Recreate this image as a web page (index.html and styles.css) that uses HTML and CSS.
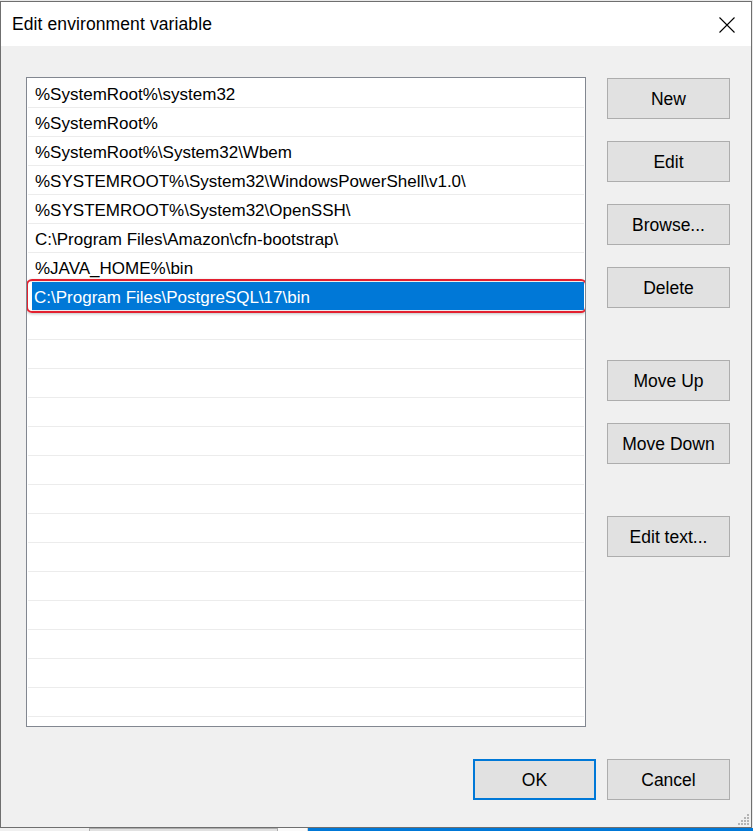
FILE: index.html
```html
<!DOCTYPE html>
<html lang="en">
<head>
  <meta charset="UTF-8">
  <title>Edit environment variable</title>
  <link rel="stylesheet" href="styles.css">
</head>
<body>
  <div class="window">
    <div class="titlebar">
      <span class="title">Edit environment variable</span>
      <svg class="close" width="16" height="16" viewBox="0 0 16 16">
        <path d="M0.5 0.5 L15.5 15.5 M15.5 0.5 L0.5 15.5" stroke="#000" stroke-width="1.1" fill="none"/>
      </svg>
    </div>

    <div class="client">
      <div class="main">
        <ul class="list">
          <li>%SystemRoot%\system32</li>
          <li>%SystemRoot%</li>
          <li>%SystemRoot%\System32\Wbem</li>
          <li>%SYSTEMROOT%\System32\WindowsPowerShell\v1.0\</li>
          <li>%SYSTEMROOT%\System32\OpenSSH\</li>
          <li>C:\Program Files\Amazon\cfn-bootstrap\</li>
          <li>%JAVA_HOME%\bin</li>
          <li class="selected">C:\Program Files\PostgreSQL\17\bin</li>
          <li></li><li></li><li></li><li></li><li></li><li></li><li></li>
          <li></li><li></li><li></li><li></li><li></li><li></li><li></li>
        </ul>

        <div class="actions">
          <div class="group">
            <button>New</button>
            <button>Edit</button>
            <button>Browse...</button>
            <button>Delete</button>
          </div>
          <div class="group">
            <button>Move Up</button>
            <button>Move Down</button>
          </div>
          <div class="group">
            <button>Edit text...</button>
          </div>
        </div>
      </div>

      <div class="footer">
        <button class="default">OK</button>
        <button>Cancel</button>
      </div>

      <!-- poignée de redimensionnement -->
      <svg class="grip" width="12" height="12" viewBox="0 0 12 12" fill="#b4b4b4">
        <rect x="9" y="0" width="2" height="2"/>
        <rect x="6" y="3" width="2" height="2"/>
        <rect x="9" y="3" width="2" height="2"/>
        <rect x="3" y="6" width="2" height="2"/>
        <rect x="6" y="6" width="2" height="2"/>
        <rect x="9" y="6" width="2" height="2"/>
        <rect x="0" y="9" width="2" height="2"/>
        <rect x="3" y="9" width="2" height="2"/>
        <rect x="6" y="9" width="2" height="2"/>
        <rect x="9" y="9" width="2" height="2"/>
      </svg>
    </div>
  </div>

  <div class="backdrop">
    <span class="bd-light"></span>
    <span class="bd-button"></span>
    <span class="bd-white"></span>
    <span class="bd-blue"></span>
  </div>
</body>
</html>
```

FILE: styles.css
```css
/* === Base === */
:root {
  --win-border: #6f6f6f;
  --client-bg:  #f0f0f0;
  --btn-bg:     #e1e1e1;
  --btn-border: #adadad;
  --accent:     #0078d7;
  --mark:       #e3202f;
}

* {
  box-sizing: border-box;
  margin: 0;
  padding: 0;
}

body {
  font-family: "Liberation Sans", Arial, sans-serif;
  background: #e9e9e9;
  color: #000;
  padding-top: 1px;
  width: 753px;
  overflow: hidden;
}

/* === Fenêtre === */
.window {
  width: 752px;
  height: 827px;
  border: 1px solid var(--win-border);
  background: var(--client-bg);
  display: flex;
  flex-direction: column;
}

.titlebar {
  height: 44px;
  background: #fff;
  display: flex;
  align-items: center;
  justify-content: space-between;
  padding: 1px 16px 0 11px;
}
.title {
  font-size: 17.5px;
  letter-spacing: 0.1px;
}
.close {
  display: block;
}

.client {
  flex: 1;
  position: relative;
  padding: 31px 21px 0 25px;
}

.main {
  display: flex;
  gap: 21px;
}

/* === Liste des chemins === */
.list {
  list-style: none;
  width: 560px;
  height: 650px;
  border: 1px solid #828790;
  background: #fff;
  padding-top: 1px;
  overflow: hidden;
}
.list li {
  height: 29px;
  line-height: 31px;
  margin: 0 1px 0 1px;
  padding-left: 7px;
  border-bottom: 1px solid #ececec;
  font-size: 17px;
  white-space: nowrap;
  overflow: hidden;
}
.list li.selected {
  position: relative;
  overflow: visible;
  margin-left: 5px;
  padding-left: 2px;
  background: var(--accent);
  background-clip: padding-box;
  color: #fff;
}
/* cadre rouge d'annotation */
.list li.selected::after {
  content: "";
  position: absolute;
  top: -3px;
  bottom: -3px;
  left: -6px;
  right: -3px;
  border: 2px solid var(--mark);
  border-radius: 6px;
  box-shadow: 0 1px 3px rgba(0, 0, 0, 0.25);
}

/* === Boutons === */
button {
  width: 123px;
  height: 41px;
  background: var(--btn-bg);
  border: 1px solid var(--btn-border);
  font-family: inherit;
  font-size: 17.5px;
  color: #000;
  padding-top: 1px;
}

.actions {
  display: flex;
  flex-direction: column;
  gap: 52px;
  padding-top: 1px;
}
.group {
  display: flex;
  flex-direction: column;
  gap: 22px;
}

.footer {
  display: flex;
  justify-content: flex-end;
  gap: 11px;
  margin-top: 32px;
}
button.default {
  border: 2px solid var(--accent);
}

.grip {
  position: absolute;
  right: 1px;
  bottom: 1px;
}

/* === Arrière-plan (bas) === */
.backdrop {
  display: flex;
  height: 4px;
}
.bd-light  { width: 89px;  background: #f0f0f0; }
.bd-button { width: 189px; background: #e1e1e1; border-top: 1px solid #adadad; border-left: 1px solid #adadad; border-right: 1px solid #adadad; }
.bd-white  { width: 30px;  background: #fafafa; border-right: 1px solid #d0d0d0; }
.bd-blue   { flex: 1;      background: var(--accent); }
```
